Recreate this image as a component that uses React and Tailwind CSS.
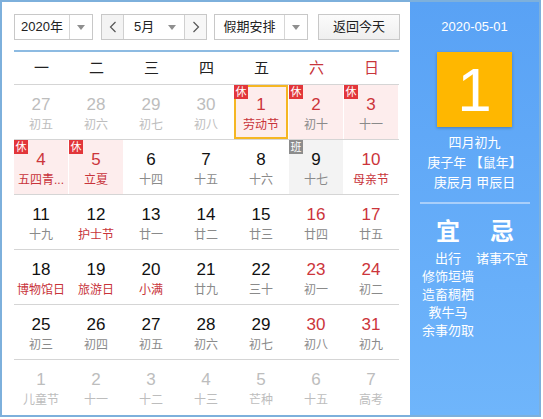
import React from "react";

const FONT = { fontFamily: '"Liberation Sans", Arial, "Noto Sans CJK SC", sans-serif' };

const Tri = () => (
  <span className="block w-0 h-0 border-l-[4px] border-r-[4px] border-t-[5px] border-l-transparent border-r-transparent border-t-[#8f8f8f]" />
);

const Chev = ({ dir }) => (
  <svg width="8" height="12" viewBox="0 0 8 12" fill="none" stroke="#555" strokeWidth="1.2">
    {dir === "l" ? <polyline points="6.5,1 1.5,6 6.5,11" /> : <polyline points="1.5,1 6.5,6 1.5,11" />}
  </svg>
);

const rows = [
  [
    { d: 27, l: "初五", o: 1 },
    { d: 28, l: "初六", o: 1 },
    { d: 29, l: "初七", o: 1 },
    { d: 30, l: "初八", o: 1 },
    { d: 1, l: "劳动节", h: 1, r: 1, lr: 1, sel: 1 },
    { d: 2, l: "初十", h: 1, r: 1 },
    { d: 3, l: "十一", h: 1, r: 1 },
  ],
  [
    { d: 4, l: "五四青...", h: 1, r: 1, lr: 1 },
    { d: 5, l: "立夏", h: 1, r: 1, lr: 1 },
    { d: 6, l: "十四" },
    { d: 7, l: "十五" },
    { d: 8, l: "十六" },
    { d: 9, l: "十七", w: 1 },
    { d: 10, l: "母亲节", r: 1, lr: 1 },
  ],
  [
    { d: 11, l: "十九" },
    { d: 12, l: "护士节", lr: 1 },
    { d: 13, l: "廿一" },
    { d: 14, l: "廿二" },
    { d: 15, l: "廿三" },
    { d: 16, l: "廿四", r: 1 },
    { d: 17, l: "廿五", r: 1 },
  ],
  [
    { d: 18, l: "博物馆日", lr: 1 },
    { d: 19, l: "旅游日", lr: 1 },
    { d: 20, l: "小满", lr: 1 },
    { d: 21, l: "廿九" },
    { d: 22, l: "三十" },
    { d: 23, l: "初一", r: 1 },
    { d: 24, l: "初二", r: 1 },
  ],
  [
    { d: 25, l: "初三" },
    { d: 26, l: "初四" },
    { d: 27, l: "初五" },
    { d: 28, l: "初六" },
    { d: 29, l: "初七" },
    { d: 30, l: "初八", r: 1 },
    { d: 31, l: "初九", r: 1 },
  ],
  [
    { d: 1, l: "儿童节", o: 1 },
    { d: 2, l: "十一", o: 1 },
    { d: 3, l: "十二", o: 1 },
    { d: 4, l: "十三", o: 1 },
    { d: 5, l: "芒种", o: 1 },
    { d: 6, l: "十五", o: 1 },
    { d: 7, l: "高考", o: 1 },
  ],
];

function Cell({ c }) {
  const bg = c.h ? "bg-[#fdeded]" : c.w ? "bg-[#f3f3f3]" : "";
  const numColor = c.o ? "text-[#bdbdbd]" : c.r ? "text-[#cc353b]" : "text-[#111]";
  const lunColor = c.o ? "text-[#bdbdbd]" : c.lr ? "text-[#c8333a]" : "text-[#8a8a8a]";
  return (
    <div className="w-[55px] h-[54px] pr-px">
      <div className={`relative w-full h-full ${bg} flex flex-col items-center pt-[10px]`}>
        {c.sel ? (
          <div className="absolute inset-0 border-2 border-[#f5b623]" />
        ) : null}
        {c.h ? (
          <div className="absolute left-0 top-0 w-[14px] h-[14px] bg-[#e2363a] text-white text-[11px] leading-[14px] text-center">休</div>
        ) : null}
        {c.w ? (
          <div className="absolute left-0 top-0 w-[14px] h-[14px] bg-[#8c8c8c] text-white text-[11px] leading-[14px] text-center">班</div>
        ) : null}
        <div className={`text-[17px] leading-[20px] ${numColor}`}>{c.d}</div>
        <div className={`mt-[2px] text-[12px] leading-[16px] whitespace-nowrap ${lunColor}`}>{c.l}</div>
      </div>
    </div>
  );
}

export default function App() {
  const week = ["一", "二", "三", "四", "五", "六", "日"];
  return (
    <div style={FONT} className="w-[541px] h-[417px] border-2 border-[#7db0dc] flex bg-white">
      {/* left */}
      <div className="w-[408px] pl-[12px] pt-[12px]">
        <div className="flex items-center h-[26px] text-[13px] text-[#222]">
          <div className="flex h-[26px] w-[79px] border border-[#c8c8c8] bg-white">
            <div className="w-[54px] flex items-center justify-center">2020年</div>
            <div className="flex-1 border-l border-[#d6d6d6] flex items-center justify-center"><Tri /></div>
          </div>
          <div className="flex h-[26px] w-[106px] ml-[8px] border border-[#c8c8c8] bg-white">
            <div className="w-[22px] bg-[#f3f3f3] flex items-center justify-center border-r border-[#d0d0d0]"><Chev dir="l" /></div>
            <div className="flex-1 flex items-center pl-[10px] pr-[8px]">
              <span className="flex-1">5月</span>
              <Tri />
            </div>
            <div className="w-[22px] bg-[#f7f7f7] flex items-center justify-center border-l border-[#d0d0d0]"><Chev dir="r" /></div>
          </div>
          <div className="flex h-[26px] w-[94px] ml-[7px] border border-[#c8c8c8] bg-white">
            <div className="w-[69px] flex items-center justify-center">假期安排</div>
            <div className="flex-1 border-l border-[#d6d6d6] flex items-center justify-center"><Tri /></div>
          </div>
          <div className="h-[26px] w-[82px] ml-[10px] border border-[#c8c8c8] bg-gradient-to-b from-[#fbfbfb] to-[#efefef] flex items-center justify-center">
            返回今天
          </div>
        </div>
        <div className="w-[385px] mt-[10px] h-[2px] bg-[#8dbbe2]" />
        <div className="w-[385px] h-[32px] flex items-center">
          {week.map((w, i) => (
            <div key={w} className={`w-[55px] text-center text-[15px] ${i >= 5 ? "text-[#c8353b]" : "text-[#222]"}`}>{w}</div>
          ))}
        </div>
        <div className="w-[385px]">
          {rows.map((r, i) => (
            <div key={i} className="flex border-t border-[#d5d5d5]">
              {r.map((c, j) => (
                <Cell key={j} c={c} />
              ))}
            </div>
          ))}
        </div>
      </div>
      {/* right panel */}
      <div className="flex-1 bg-gradient-to-b from-[#59a2f5] to-[#6fb5fb] text-white flex flex-col items-center">
        <div className="mt-[16px] text-[13px] leading-[18px]">2020-05-01</div>
        <div className="mt-[16px] w-[75px] h-[75px] bg-[#ffb700] shadow-[0_1px_3px_rgba(0,0,0,0.25)] flex items-center justify-center text-[62px] leading-none">
          1
        </div>
        <div className="mt-[6px] text-[13px] leading-[20px] text-center">
          <div>四月初九</div>
          <div>庚子年 【鼠年】</div>
          <div>庚辰月 甲辰日</div>
        </div>
        <div className="mt-[9px] w-[110px] h-[2px] bg-[#a9cffa]" />
        <div className="w-full flex pl-[11px] mt-[13px]">
          <div className="w-[54px] flex flex-col items-center">
            <div className="text-[24px] leading-[30px] font-bold">宜</div>
            <div className="mt-[3px] text-[13px] leading-[18px] text-center whitespace-nowrap">
              <div>出行</div>
              <div>修饰垣墙</div>
              <div>造畜稠栖</div>
              <div>教牛马</div>
              <div>余事勿取</div>
            </div>
          </div>
          <div className="w-[54px] flex flex-col items-center">
            <div className="text-[24px] leading-[30px] font-bold">忌</div>
            <div className="mt-[3px] text-[13px] leading-[18px] whitespace-nowrap">诸事不宜</div>
          </div>
        </div>
      </div>
    </div>
  );
}
